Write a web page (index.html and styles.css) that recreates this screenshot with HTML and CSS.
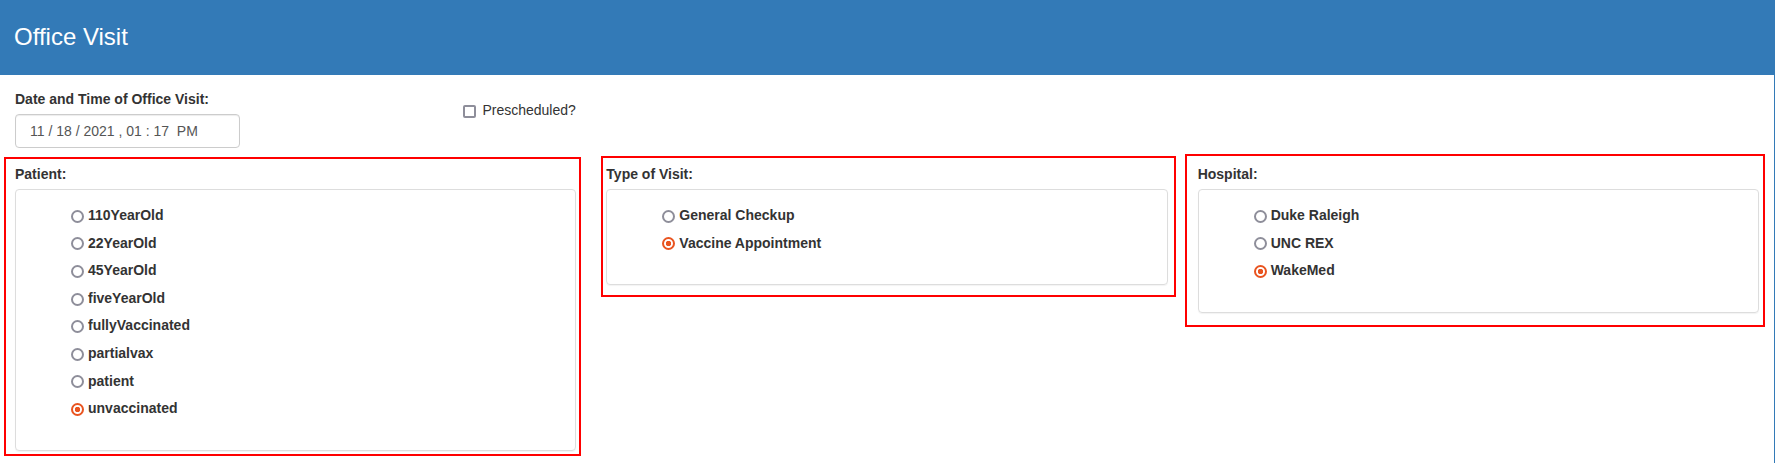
FILE: index.html
```html
<!DOCTYPE html>
<html lang="en">
<head>
<meta charset="utf-8">
<title>Office Visit</title>
<link rel="stylesheet" href="styles.css">
</head>
<body>
<div class="panel">
  <div class="panel-heading">
    <h3 class="panel-title">Office Visit</h3>
  </div>
  <div class="panel-body">
    <div class="row row-4">
      <div class="col">
        <div class="form-group">
          <label class="control-label">Date and Time of Office Visit:</label>
          <div class="date-input">11 / 18 / 2021 , 01 : 17  PM</div>
        </div>
      </div>
      <div class="col">
        <div class="checkbox">
          <label><input type="checkbox"> Prescheduled?</label>
        </div>
      </div>
      <div class="col"></div>
      <div class="col"></div>
    </div>
    <div class="row row-3">
      <div class="col">
        <div class="mark mark-1">
          <label class="control-label">Patient:</label>
          <div class="options">
            <label class="option"><input type="radio" name="patient">110YearOld</label>
            <label class="option"><input type="radio" name="patient">22YearOld</label>
            <label class="option"><input type="radio" name="patient">45YearOld</label>
            <label class="option"><input type="radio" name="patient">fiveYearOld</label>
            <label class="option"><input type="radio" name="patient">fullyVaccinated</label>
            <label class="option"><input type="radio" name="patient">partialvax</label>
            <label class="option"><input type="radio" name="patient">patient</label>
            <label class="option"><input type="radio" name="patient" checked>unvaccinated</label>
          </div>
        </div>
      </div>
      <div class="col">
        <div class="mark mark-2">
          <label class="control-label">Type of Visit:</label>
          <div class="options">
            <label class="option"><input type="radio" name="type">General Checkup</label>
            <label class="option"><input type="radio" name="type" checked>Vaccine Appointment</label>
          </div>
        </div>
      </div>
      <div class="col">
        <div class="mark mark-3">
          <label class="control-label">Hospital:</label>
          <div class="options">
            <label class="option"><input type="radio" name="hospital">Duke Raleigh</label>
            <label class="option"><input type="radio" name="hospital">UNC REX</label>
            <label class="option"><input type="radio" name="hospital" checked>WakeMed</label>
          </div>
        </div>
      </div>
    </div>
  </div>
</div>
</body>
</html>
```

FILE: styles.css
```css
* { box-sizing: border-box; }
html, body { margin: 0; padding: 0; }
body {
  font-family: "Liberation Sans", Arial, sans-serif;
  font-size: 14px;
  line-height: 20px;
  color: #333;
  background: #fff;
}
.panel {
  border-right: 1px solid #337ab7;
  min-height: 463px;
}
.panel-heading {
  height: 75px;
  background: #337ab7;
  color: #fff;
  display: flex;
  align-items: center;
  padding-left: 14px;
}
.panel-title {
  margin: 0;
  font-size: 24px;
  font-weight: 400;
  line-height: 1.1;
}
.panel-body { padding-top: 14px; }
.row { display: grid; }
.row-4 { grid-template-columns: repeat(4, 1fr); }
.row-3 { grid-template-columns: repeat(3, 1fr); align-items: start; }
.col { padding: 0 15px; min-width: 0; }
.form-group { margin-bottom: 16px; }
.control-label {
  display: block;
  font-weight: 700;
  margin-bottom: 5px;
}
.date-input {
  width: 225px;
  height: 34px;
  border: 1px solid #ccc;
  border-radius: 4px;
  box-shadow: inset 0 1px 1px rgba(0, 0, 0, .075);
  padding-left: 14px;
  display: flex;
  align-items: center;
  color: #555;
  white-space: pre;
}
.checkbox { margin-top: 11px; }
.checkbox input {
  appearance: none;
  -webkit-appearance: none;
  width: 13px;
  height: 13px;
  margin: 0 3px 0 4px;
  vertical-align: middle;
  border: 2px solid #8e8e9a;
  border-radius: 2px;
  background: #fff;
}
.mark { border: 2px solid #f00; }
.mark-1 { margin: -7px -5px -5px -11px; padding: 5px 3px 3px 9px; }
.mark-2 { margin: -8px -8px -12px -5px; padding: 6px 6px 10px 3px; }
.mark-3 { margin: -10px -6px -14px -13px; padding: 8px 4px 12px 11px; }
.options {
  border: 1px solid #ddd;
  border-radius: 4px;
  box-shadow: 0 1px 1px rgba(0, 0, 0, .05);
  padding: 12px 0 27px 55px;
}
.option {
  display: block;
  line-height: 27.6px;
  font-weight: 700;
}
.option input {
  appearance: none;
  -webkit-appearance: none;
  width: 13px;
  height: 13px;
  margin: 0 4px 0 0;
  vertical-align: middle;
  border: 2px solid #8e8e9a;
  border-radius: 50%;
  background: #fff;
}
.option input:checked {
  border-color: #e95420;
  background: radial-gradient(circle, #e95420 0 2.5px, #fff 3px);
}
```
